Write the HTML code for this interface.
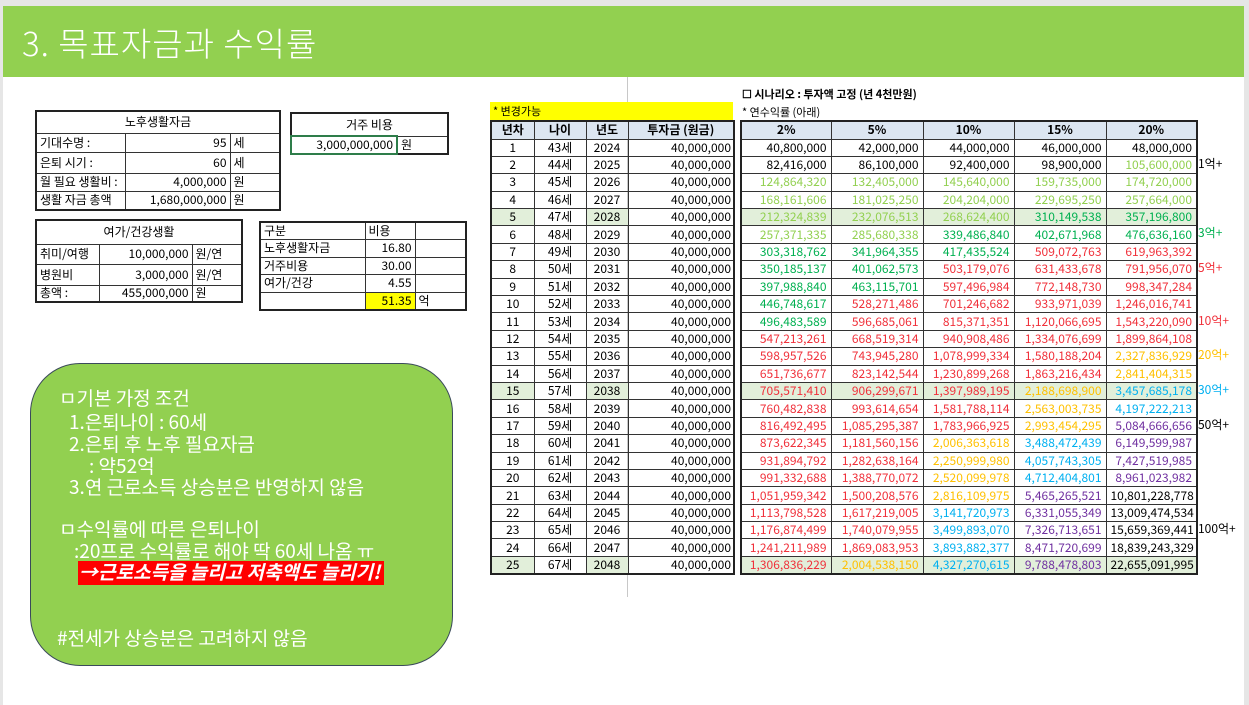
<!DOCTYPE html>
<html><head><meta charset="utf-8">
<style>
*{margin:0;padding:0;box-sizing:border-box}
body{width:1249px;height:705px;background:#fff;position:relative;overflow:hidden;font-family:"Liberation Sans","Noto Sans CJK KR",sans-serif;color:#000}
.top{position:absolute;left:0;top:0;width:1249px;height:6px;background:#e6e6e6}
.lside{position:absolute;left:0;top:0;width:3px;height:705px;background:#e6e6e6}
.rside{position:absolute;right:0;top:0;width:5px;height:705px;background:#e6e6e6}
.hdr{position:absolute;left:3px;top:6px;width:1241px;height:71px;background:#92d050}
.hdr span{position:absolute;left:19px;top:12px;font-size:33px;color:#fff;font-family:"Noto Sans CJK KR","Liberation Sans",sans-serif;font-weight:300;letter-spacing:1px}
table{position:absolute;border-collapse:collapse;table-layout:fixed;font-size:12px;font-family:"Noto Sans CJK KR","Liberation Sans",sans-serif}
td{border:1px solid #333;padding:0 3px;white-space:nowrap;overflow:hidden;line-height:14px}
.r{text-align:right}.c{text-align:center}
.lt td{height:17.4px;text-align:center;padding:0 2px}
.lt td.a{text-align:right}
.rt td{height:17.4px;text-align:right;padding:0 4px}
.lt tr.h td,.rt tr.h td{background:#dce6f1;font-weight:bold;text-align:center;height:18px}
.gr{background:#e2efda}
.k{color:#000}.lg{color:#92d050}.g{color:#00b050}.rd{color:#f0303a}.o{color:#ffc000}.cy{color:#00b0f0}.p{color:#7030a0}
.lab{position:absolute;left:1198px;font-size:12px;font-family:"Noto Sans CJK KR","Liberation Sans",sans-serif}
.gbox{position:absolute;left:30px;top:363px;width:423px;height:303px;background:#92d050;border:1.5px solid #3a4a5a;border-radius:50px}
.gbox div{position:absolute;color:#fff;font-size:19px;font-family:"Noto Sans CJK KR","Liberation Sans",sans-serif;white-space:nowrap;line-height:22px}
</style></head><body>
<div class="top"></div><div class="lside"></div><div class="rside"></div>
<div class="hdr"><span>3. 목표자금과 수익률</span></div>

<table style="left:35px;top:110px;width:244px;border:2px solid #222">
<col style="width:89px"><col style="width:105px"><col style="width:50px">
<tr><td colspan="3" class="c" style="height:22px">노후생활자금</td></tr>
<tr><td style="height:19px">기대수명 :</td><td class="r">95</td><td>세</td></tr>
<tr><td style="height:21px">은퇴 시기 :</td><td class="r">60</td><td>세</td></tr>
<tr><td style="height:18px">월 필요 생활비 :</td><td class="r">4,000,000</td><td>원</td></tr>
<tr><td style="height:19px">생활 자금 총액</td><td class="r">1,680,000,000</td><td>원</td></tr>
</table>

<table style="left:290px;top:112px;width:157px;border:2px solid #222">
<col style="width:106px"><col style="width:51px">
<tr><td colspan="2" class="c" style="height:23px">거주 비용</td></tr>
<tr><td class="r" style="height:18px;border:2px solid #2e7d4a">3,000,000,000</td><td>원</td></tr>
</table>

<table style="left:35px;top:219px;width:206px;border:2px solid #222">
<col style="width:63px"><col style="width:93px"><col style="width:50px">
<tr><td colspan="3" class="c" style="height:24px">여가/건강생활</td></tr>
<tr><td style="height:20px">취미/여행</td><td class="r">10,000,000</td><td>원/연</td></tr>
<tr><td style="height:21px">병원비</td><td class="r">3,000,000</td><td>원/연</td></tr>
<tr><td style="height:17px">총액 :</td><td class="r">455,000,000</td><td>원</td></tr>
</table>

<table style="left:259px;top:221px;width:206px;border:2px solid #222">
<col style="width:105px"><col style="width:50px"><col style="width:51px">
<tr><td style="height:17.5px">구분</td><td>비용</td><td></td></tr>
<tr><td style="height:17.5px">노후생활자금</td><td class="r">16.80</td><td></td></tr>
<tr><td style="height:17.5px">거주비용</td><td class="r">30.00</td><td></td></tr>
<tr><td style="height:17.5px">여가/건강</td><td class="r">4.55</td><td></td></tr>
<tr><td style="height:17.5px"></td><td class="r" style="background:#ffff00">51.35</td><td>억</td></tr>
</table>

<div class="gbox">
<div style="left:28px;top:23px">ㅁ기본 가정 조건</div>
<div style="left:38px;top:47px">1.은퇴나이 : 60세</div>
<div style="left:38px;top:69px">2.은퇴 후 노후 필요자금</div>
<div style="left:58px;top:91px">: 약52억</div>
<div style="left:38px;top:112px">3.연 근로소득 상승분은 반영하지 않음</div>
<div style="left:28px;top:154px">ㅁ수익률에 따른 은퇴나이</div>
<div style="left:43px;top:176px">:20프로 수익률로 해야 딱 60세 나옴 ㅠ</div>
<div style="left:47px;top:197px;background:#ff0000;font-weight:bold;font-style:italic;height:24px;width:306px;padding-left:1px">→근로소득을 늘리고 저축액도 늘리기!</div>
<div style="left:26px;top:263px">#전세가 상승분은 고려하지 않음</div>
</div>

<div style="position:absolute;left:627px;top:77px;width:1px;height:520px;background:#c8c8c8"></div>
<div style="position:absolute;left:490px;top:102px;width:243px;height:18px;background:#ffff00;font-size:11px;padding-left:3px;line-height:18px;font-family:'Noto Sans CJK KR',sans-serif">* 변경가능</div>
<div style="position:absolute;left:742px;top:86px;font-size:11px;font-weight:bold;font-family:'Noto Sans CJK KR',sans-serif">☐ 시나리오 : 투자액 고정 (년 4천만원)</div>
<div style="position:absolute;left:742px;top:104px;font-size:11px;font-family:'Noto Sans CJK KR',sans-serif">* 연수익률 (아래)</div>

<table class="lt" style="left:490px;top:120px;width:243px;border:2px solid #222">
<col style="width:43px"><col style="width:52px"><col style="width:42px"><col style="width:106px">
<tr class="h"><td>년차</td><td>나이</td><td>년도</td><td>투자금 (원금)</td></tr>
<tr><td>1</td><td>43세</td><td>2024</td><td class="a">40,000,000</td></tr>
<tr><td>2</td><td>44세</td><td>2025</td><td class="a">40,000,000</td></tr>
<tr><td>3</td><td>45세</td><td>2026</td><td class="a">40,000,000</td></tr>
<tr><td>4</td><td>46세</td><td>2027</td><td class="a">40,000,000</td></tr>
<tr><td class="gr">5</td><td>47세</td><td class="gr">2028</td><td class="a">40,000,000</td></tr>
<tr><td>6</td><td>48세</td><td>2029</td><td class="a">40,000,000</td></tr>
<tr><td>7</td><td>49세</td><td>2030</td><td class="a">40,000,000</td></tr>
<tr><td>8</td><td>50세</td><td>2031</td><td class="a">40,000,000</td></tr>
<tr><td>9</td><td>51세</td><td>2032</td><td class="a">40,000,000</td></tr>
<tr><td>10</td><td>52세</td><td>2033</td><td class="a">40,000,000</td></tr>
<tr><td>11</td><td>53세</td><td>2034</td><td class="a">40,000,000</td></tr>
<tr><td>12</td><td>54세</td><td>2035</td><td class="a">40,000,000</td></tr>
<tr><td>13</td><td>55세</td><td>2036</td><td class="a">40,000,000</td></tr>
<tr><td>14</td><td>56세</td><td>2037</td><td class="a">40,000,000</td></tr>
<tr><td class="gr">15</td><td>57세</td><td class="gr">2038</td><td class="a">40,000,000</td></tr>
<tr><td>16</td><td>58세</td><td>2039</td><td class="a">40,000,000</td></tr>
<tr><td>17</td><td>59세</td><td>2040</td><td class="a">40,000,000</td></tr>
<tr><td>18</td><td>60세</td><td>2041</td><td class="a">40,000,000</td></tr>
<tr><td>19</td><td>61세</td><td>2042</td><td class="a">40,000,000</td></tr>
<tr><td>20</td><td>62세</td><td>2043</td><td class="a">40,000,000</td></tr>
<tr><td>21</td><td>63세</td><td>2044</td><td class="a">40,000,000</td></tr>
<tr><td>22</td><td>64세</td><td>2045</td><td class="a">40,000,000</td></tr>
<tr><td>23</td><td>65세</td><td>2046</td><td class="a">40,000,000</td></tr>
<tr><td>24</td><td>66세</td><td>2047</td><td class="a">40,000,000</td></tr>
<tr><td class="gr">25</td><td>67세</td><td class="gr">2048</td><td class="a">40,000,000</td></tr>
</table>

<table class="rt" style="left:740px;top:120px;width:456px;border:2px solid #222">
<col style="width:90px"><col style="width:92px"><col style="width:91px"><col style="width:92px"><col style="width:91px">
<tr class="h"><td>2%</td><td>5%</td><td>10%</td><td>15%</td><td>20%</td></tr>
<tr><td class="k">40,800,000</td><td class="k">42,000,000</td><td class="k">44,000,000</td><td class="k">46,000,000</td><td class="k">48,000,000</td></tr>
<tr><td class="k">82,416,000</td><td class="k">86,100,000</td><td class="k">92,400,000</td><td class="k">98,900,000</td><td class="lg">105,600,000</td></tr>
<tr><td class="lg">124,864,320</td><td class="lg">132,405,000</td><td class="lg">145,640,000</td><td class="lg">159,735,000</td><td class="lg">174,720,000</td></tr>
<tr><td class="lg">168,161,606</td><td class="lg">181,025,250</td><td class="lg">204,204,000</td><td class="lg">229,695,250</td><td class="lg">257,664,000</td></tr>
<tr class="gr"><td class="lg">212,324,839</td><td class="lg">232,076,513</td><td class="lg">268,624,400</td><td class="g">310,149,538</td><td class="g">357,196,800</td></tr>
<tr><td class="lg">257,371,335</td><td class="lg">285,680,338</td><td class="g">339,486,840</td><td class="g">402,671,968</td><td class="g">476,636,160</td></tr>
<tr><td class="g">303,318,762</td><td class="g">341,964,355</td><td class="g">417,435,524</td><td class="rd">509,072,763</td><td class="rd">619,963,392</td></tr>
<tr><td class="g">350,185,137</td><td class="g">401,062,573</td><td class="rd">503,179,076</td><td class="rd">631,433,678</td><td class="rd">791,956,070</td></tr>
<tr><td class="g">397,988,840</td><td class="g">463,115,701</td><td class="rd">597,496,984</td><td class="rd">772,148,730</td><td class="rd">998,347,284</td></tr>
<tr><td class="g">446,748,617</td><td class="rd">528,271,486</td><td class="rd">701,246,682</td><td class="rd">933,971,039</td><td class="rd">1,246,016,741</td></tr>
<tr><td class="g">496,483,589</td><td class="rd">596,685,061</td><td class="rd">815,371,351</td><td class="rd">1,120,066,695</td><td class="rd">1,543,220,090</td></tr>
<tr><td class="rd">547,213,261</td><td class="rd">668,519,314</td><td class="rd">940,908,486</td><td class="rd">1,334,076,699</td><td class="rd">1,899,864,108</td></tr>
<tr><td class="rd">598,957,526</td><td class="rd">743,945,280</td><td class="rd">1,078,999,334</td><td class="rd">1,580,188,204</td><td class="o">2,327,836,929</td></tr>
<tr><td class="rd">651,736,677</td><td class="rd">823,142,544</td><td class="rd">1,230,899,268</td><td class="rd">1,863,216,434</td><td class="o">2,841,404,315</td></tr>
<tr class="gr"><td class="rd">705,571,410</td><td class="rd">906,299,671</td><td class="rd">1,397,989,195</td><td class="o">2,188,698,900</td><td class="cy">3,457,685,178</td></tr>
<tr><td class="rd">760,482,838</td><td class="rd">993,614,654</td><td class="rd">1,581,788,114</td><td class="o">2,563,003,735</td><td class="cy">4,197,222,213</td></tr>
<tr><td class="rd">816,492,495</td><td class="rd">1,085,295,387</td><td class="rd">1,783,966,925</td><td class="o">2,993,454,295</td><td class="p">5,084,666,656</td></tr>
<tr><td class="rd">873,622,345</td><td class="rd">1,181,560,156</td><td class="o">2,006,363,618</td><td class="cy">3,488,472,439</td><td class="p">6,149,599,987</td></tr>
<tr><td class="rd">931,894,792</td><td class="rd">1,282,638,164</td><td class="o">2,250,999,980</td><td class="cy">4,057,743,305</td><td class="p">7,427,519,985</td></tr>
<tr><td class="rd">991,332,688</td><td class="rd">1,388,770,072</td><td class="o">2,520,099,978</td><td class="cy">4,712,404,801</td><td class="p">8,961,023,982</td></tr>
<tr><td class="rd">1,051,959,342</td><td class="rd">1,500,208,576</td><td class="o">2,816,109,975</td><td class="p">5,465,265,521</td><td class="k">10,801,228,778</td></tr>
<tr><td class="rd">1,113,798,528</td><td class="rd">1,617,219,005</td><td class="cy">3,141,720,973</td><td class="p">6,331,055,349</td><td class="k">13,009,474,534</td></tr>
<tr><td class="rd">1,176,874,499</td><td class="rd">1,740,079,955</td><td class="cy">3,499,893,070</td><td class="p">7,326,713,651</td><td class="k">15,659,369,441</td></tr>
<tr><td class="rd">1,241,211,989</td><td class="rd">1,869,083,953</td><td class="cy">3,893,882,377</td><td class="p">8,471,720,699</td><td class="k">18,839,243,329</td></tr>
<tr class="gr"><td class="rd">1,306,836,229</td><td class="o">2,004,538,150</td><td class="cy">4,327,270,615</td><td class="p">9,788,478,803</td><td class="k">22,655,091,995</td></tr>
</table>

<div class="lab" style="top:155px">1억+</div>
<div class="lab g" style="top:224px">3억+</div>
<div class="lab rd" style="top:259px">5억+</div>
<div class="lab rd" style="top:312px">10억+</div>
<div class="lab o" style="top:346px">20억+</div>
<div class="lab cy" style="top:381px">30억+</div>
<div class="lab" style="top:416px">50억+</div>
<div class="lab" style="top:520px">100억+</div>
</body></html>
